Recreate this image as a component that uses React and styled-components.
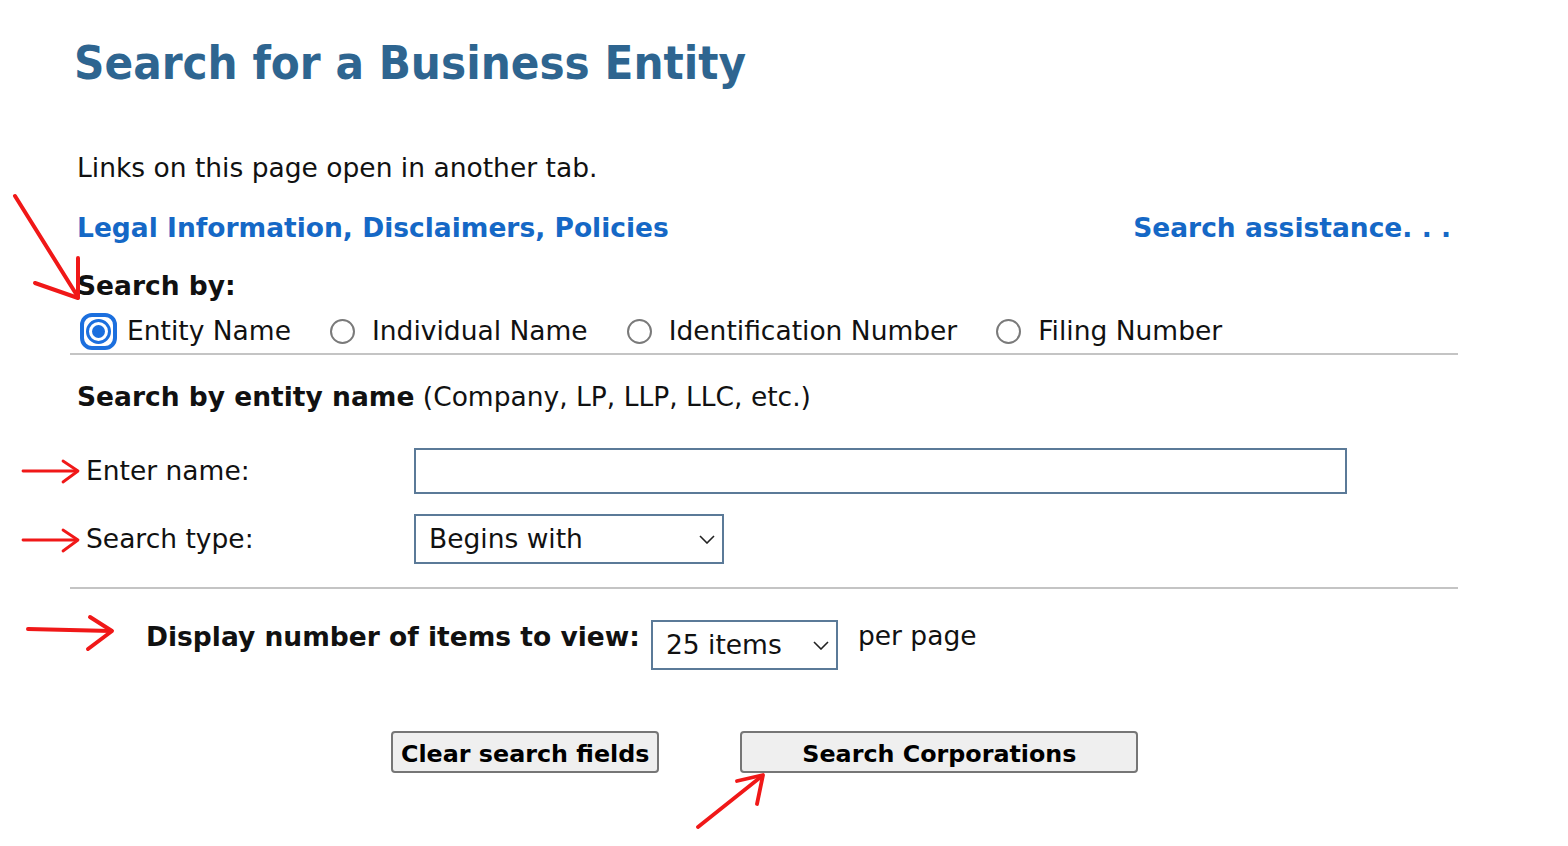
import React from 'react';
import styled, { createGlobalStyle } from 'styled-components';

const GlobalStyle = createGlobalStyle`
  html, body {
    margin: 0;
    padding: 0;
    background: #fff;
  }
  body {
    font-family: 'DejaVu Sans', Verdana, sans-serif;
    color: #111;
  }
`;

const radios = [
  { label: 'Entity Name', checked: true },
  { label: 'Individual Name' },
  { label: 'Identification Number' },
  { label: 'Filing Number' },
];

const Chevron = () => (
  <ChevronIcon viewBox="0 0 16 9" width="16" height="9">
    <path d="M1 1 L8 8 L15 1" fill="none" stroke="#222" strokeWidth="1.6" />
  </ChevronIcon>
);

// hand drawn red annotation arrows sitting over the page
const Annotations = () => (
  <Overlay viewBox="0 0 1568 846" width="1568" height="846">
    <g fill="none" stroke="#f01818" strokeLinecap="round" strokeLinejoin="round">
      <g strokeWidth="4">
        <path d="M15 196 L78 297" />
        <path d="M35 283 L78 298 L78 258" />
      </g>
      <g strokeWidth="2.8">
        <path d="M23 471 L77 471" />
        <path d="M63 461 L78 471 L63 482" />
        <path d="M23 540 L77 540" />
        <path d="M63 530 L78 540 L63 551" />
      </g>
      <g strokeWidth="4">
        <path d="M28 629 Q70 630 111 631" />
        <path d="M90 617 L112 631 L88 649" />
      </g>
      <g strokeWidth="3.8">
        <path d="M698 827 L762 776" />
        <path d="M737 781 L763 775 L757 804" />
      </g>
    </g>
  </Overlay>
);

const App = () => {
  return (
    <Page>
      <GlobalStyle />
      <Title>Search for a Business Entity</Title>
      <Intro>Links on this page open in another tab.</Intro>
      <LinkRow>
        <BlueLink href="#">Legal Information, Disclaimers, Policies</BlueLink>
        <BlueLink href="#">Search assistance. . .</BlueLink>
      </LinkRow>
      <SearchByLabel>Search by:</SearchByLabel>
      <RadioRow>
        {radios.map((r) => (
          <RadioOption key={r.label}>
            {r.checked ? (
              <FocusRing>
                <RadioCircle $checked>
                  <RadioDot />
                </RadioCircle>
              </FocusRing>
            ) : (
              <RadioCircle />
            )}
            <span>{r.label}</span>
          </RadioOption>
        ))}
      </RadioRow>
      <Rule />
      <SectionHeading>
        <strong>Search by entity name</strong> (Company, LP, LLP, LLC, etc.)
      </SectionHeading>
      <FormGrid>
        <FieldLabel>Enter name:</FieldLabel>
        <TextInput type="text" />
        <FieldLabel>Search type:</FieldLabel>
        <SelectWrap $width={310}>
          <Select defaultValue="begins">
            <option value="begins">Begins with</option>
            <option value="contains">Contains</option>
          </Select>
          <Chevron />
        </SelectWrap>
      </FormGrid>
      <Rule $top={23} />
      <DisplayRow>
        <DisplayLabel>Display number of items to view:</DisplayLabel>
        <SelectWrap $width={187}>
          <Select defaultValue="25">
            <option value="25">25 items</option>
            <option value="50">50 items</option>
          </Select>
          <Chevron />
        </SelectWrap>
        <PerPage>per page</PerPage>
      </DisplayRow>
      <ButtonRow>
        <Button>Clear search fields</Button>
        <Button $width={398}>Search Corporations</Button>
      </ButtonRow>
      <Annotations />
    </Page>
  );
};

export default App;

const Page = styled.div`
  position: relative;
  width: 1458px;
  height: 846px;
  box-sizing: border-box;
  padding: 35px 0 0 70px;
  font-size: 26.5px;
  line-height: 32px;
`;

const Overlay = styled.svg`
  position: absolute;
  left: 0;
  top: 0;
  pointer-events: none;
`;

const Title = styled.h1`
  margin: 0 0 0 4px;
  font-family: 'DejaVu Sans Condensed', 'DejaVu Sans', sans-serif;
  font-size: 47px;
  line-height: 56px;
  font-weight: bold;
  color: #2e6590;
`;

const Intro = styled.p`
  margin: 61px 0 0 7px;
`;

const LinkRow = styled.div`
  display: flex;
  justify-content: space-between;
  margin-top: 28px;
  padding: 0 7px;
`;

const BlueLink = styled.a`
  color: #1568c6;
  font-weight: bold;
  text-decoration: none;
`;

const SearchByLabel = styled.div`
  margin: 26px 0 0 7px;
  font-weight: bold;
`;

const RadioRow = styled.div`
  display: flex;
  align-items: center;
  height: 40px;
  margin-top: 9px;
  padding-left: 16px;
  gap: 39px;
`;

const RadioOption = styled.label`
  display: flex;
  align-items: center;
  gap: 17px;
  position: relative;
`;

const FocusRing = styled.span`
  display: flex;
  align-items: center;
  justify-content: center;
  width: 37px;
  height: 37px;
  margin: 0 -6.5px;
  box-sizing: border-box;
  border: 4px solid #1b6fde;
  border-radius: 12px;
`;

const RadioCircle = styled.span`
  display: flex;
  align-items: center;
  justify-content: center;
  width: 25px;
  height: 25px;
  box-sizing: border-box;
  border-radius: 50%;
  border: ${(p) => (p.$checked ? '3px solid #1b6fde' : '2px solid #7a7a7a')};
  background: #fff;
`;

const RadioDot = styled.span`
  width: 13px;
  height: 13px;
  border-radius: 50%;
  background: #1b6fde;
`;

const Rule = styled.hr`
  margin: ${(p) => p.$top || 2}px 0 0;
  border: none;
  height: 2px;
  background: #c4c4c4;
`;

const SectionHeading = styled.div`
  margin: 26px 0 0 7px;
`;

const FormGrid = styled.div`
  display: grid;
  grid-template-columns: 328px 933px;
  align-items: center;
  row-gap: 20px;
  margin-top: 35px;
  padding-left: 16px;
`;

const FieldLabel = styled.div``;

const TextInput = styled.input`
  height: 46px;
  box-sizing: border-box;
  border: 2px solid #5b7a98;
  font: inherit;
  padding: 0 12px;
  outline: none;
`;

const SelectWrap = styled.div`
  position: relative;
  width: ${(p) => p.$width}px;
  height: 50px;
`;

const Select = styled.select`
  appearance: none;
  width: 100%;
  height: 100%;
  box-sizing: border-box;
  border: 2px solid #5b7a98;
  border-radius: 0;
  background: #fff;
  color: #111;
  font: inherit;
  padding: 0 0 0 13px;
  outline: none;
`;

const ChevronIcon = styled.svg`
  position: absolute;
  right: 9px;
  top: 21px;
  pointer-events: none;
`;

const DisplayRow = styled.div`
  display: flex;
  align-items: flex-start;
  margin-top: 31px;
  padding-left: 76px;
`;

const DisplayLabel = styled.div`
  font-weight: bold;
  margin: 1px 11px 0 0;
`;

const PerPage = styled.div`
  margin: 0 0 0 20px;
`;

const ButtonRow = styled.div`
  display: flex;
  gap: 81px;
  margin-top: 61px;
  padding-left: 321px;
`;

const Button = styled.button`
  height: 42px;
  width: ${(p) => (p.$width ? `${p.$width}px` : 'auto')};
  box-sizing: border-box;
  padding: 3px 8px 0;
  border: 2px solid #767676;
  border-radius: 4px;
  background: #efefef;
  color: #000;
  font-family: 'DejaVu Sans', Verdana, sans-serif;
  font-size: 23.8px;
  font-weight: bold;
  cursor: pointer;
`;
